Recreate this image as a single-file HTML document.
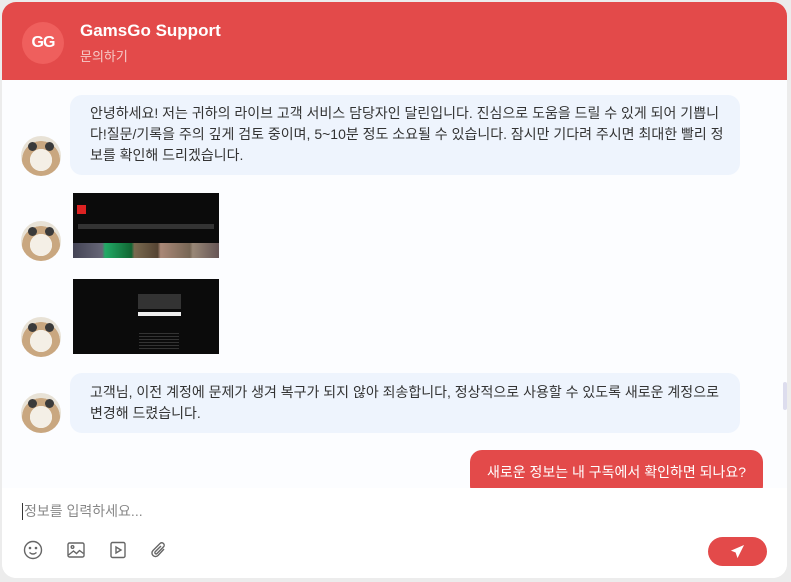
<!DOCTYPE html>
<html><head><meta charset="utf-8"><style>
*{margin:0;padding:0;box-sizing:border-box}
body{width:791px;height:582px;background:#ececec;font-family:"Liberation Sans","Noto Sans CJK KR",sans-serif;position:relative;overflow:hidden}
.card{position:absolute;left:2px;top:2px;width:785px;height:576px;background:#fff;border-radius:14px;overflow:hidden}
.hdr{position:absolute;left:0;top:0;width:785px;height:78px;background:#e34a4a}
.logo{position:absolute;left:20px;top:20px;width:42px;height:42px;border-radius:50%;background:#ef5f5d;color:#fff;font-weight:bold;font-size:16px;line-height:42px;text-align:center;letter-spacing:-1px}
.t1{position:absolute;left:78px;top:19px;color:#fff;font-weight:bold;font-size:17px}
.t2{position:absolute;left:78px;top:44px;color:#f6c9c7;font-size:13px}
.chat{position:absolute;left:0;top:78px;width:785px;height:410px;background:#fcfdff}
.b{position:absolute;background:#eef4fd;border-radius:12px;color:#333;font-size:14px;line-height:21px;padding:0 0 0 20px;white-space:nowrap;overflow:hidden}
.av{position:absolute;left:19px;width:40px;height:40px;border-radius:50%;background:radial-gradient(circle at 50% 60%,#f4efe6 0 35%,#c9a780 36% 60%,#e8e2d6 61%)}
.av:before,.av:after{content:"";position:absolute;top:6px;width:9px;height:9px;border-radius:50%;background:#3a3a3a}
.av:before{left:7px}.av:after{right:7px}
.img{position:absolute;left:71px;width:146px;background:#0b0b0b}
.me{position:absolute;left:468px;top:448px;width:293px;height:48px;background:#e34a4a;border-radius:12px;color:#fff;font-size:14px;padding-top:12px;text-align:center;white-space:nowrap}
.inp{position:absolute;left:0;top:486px;width:785px;height:90px;background:#fff}
.ph{position:absolute;left:20px;top:15px;font-size:14px;color:#888;border-left:1px solid #333;padding-left:1px;line-height:17px}
.ic{position:absolute;top:52px}
.send{position:absolute;left:706px;top:49px;width:59px;height:29px;border-radius:15px;background:#e34a4a}
.sb{position:absolute;left:781px;top:380px;width:4px;height:28px;background:#dde;border-radius:2px}
</style></head><body>
<div class="card">
<div class="chat">
<div class="b" style="left:68px;top:15px;width:670px;height:80px;padding-top:8px">안녕하세요! 저는 귀하의 라이브 고객 서비스 담당자인 달린입니다. 진심으로 도움을 드릴 수 있게 되어 기쁩니<br>다!질문/기록을 주의 깊게 검토 중이며, 5~10분 정도 소요될 수 있습니다. 잠시만 기다려 주시면 최대한 빨리 정<br>보를 확인해 드리겠습니다.</div>
<div class="av" style="top:56px"></div>
<div class="img" style="top:113px;height:65px">
<div style="position:absolute;left:4px;top:12px;width:9px;height:9px;background:#d22"></div>
<div style="position:absolute;left:5px;top:31px;width:136px;height:5px;background:#333"></div>
<div style="position:absolute;left:0;top:50px;width:146px;height:15px;background:linear-gradient(90deg,#445 0,#667 20%,#2a6 22%,#163 40%,#7a6a50 42%,#543 58%,#a87 60%,#765 80%,#987 82%,#655)"></div>
</div>
<div class="av" style="top:141px"></div>
<div class="img" style="top:199px;height:75px">
<div style="position:absolute;left:65px;top:15px;width:43px;height:15px;background:#333"></div>
<div style="position:absolute;left:65px;top:33px;width:43px;height:4px;background:#eee"></div>
<div style="position:absolute;left:66px;top:52px;width:40px;height:20px;background:repeating-linear-gradient(#0b0b0b 0 2px,#333 2px 3px)"></div>
</div>
<div class="av" style="top:237px"></div>
<div class="b" style="left:68px;top:293px;width:670px;height:60px;padding-top:9px">고객님, 이전 계정에 문제가 생겨 복구가 되지 않아 죄송합니다, 정상적으로 사용할 수 있도록 새로운 계정으로<br>변경해 드렸습니다.</div>
<div class="av" style="top:313px"></div>
</div>
<div class="me">새로운 정보는 내 구독에서 확인하면 되나요?</div>
<div class="sb"></div>
<div class="hdr"><div class="logo">GG</div><div class="t1">GamsGo Support</div><div class="t2">문의하기</div></div>
<div class="inp">
<div class="ph">정보를 입력하세요...</div>
<svg class="ic" style="left:21px" width="20" height="20" viewBox="0 0 20 20" fill="none" stroke="#666" stroke-width="1.4"><circle cx="10" cy="10" r="8.5"/><circle cx="7" cy="8" r=".6" fill="#666"/><circle cx="13" cy="8" r=".6" fill="#666"/><path d="M6.5 12.5q3.5 3 7 0"/></svg>
<svg class="ic" style="left:64px" width="20" height="20" viewBox="0 0 20 20" fill="none" stroke="#666" stroke-width="1.4"><rect x="2" y="3" width="16" height="14" rx="1.5"/><circle cx="6.5" cy="7" r="1.3"/><path d="M2.5 15l5-4 3 2.5 3-3 4 3"/></svg>
<svg class="ic" style="left:106px" width="20" height="20" viewBox="0 0 20 20" fill="none" stroke="#666" stroke-width="1.4"><rect x="3" y="2.5" width="14" height="15" rx="1.5"/><path d="M8 7v6l5-3z"/></svg>
<svg class="ic" style="left:147px" width="20" height="20" viewBox="0 0 20 20" fill="none" stroke="#666" stroke-width="1.4"><path d="M15 9l-6 6.5a3.5 3.5 0 01-5-5L11 3.5a2.4 2.4 0 013.5 3.4L8 13.5a1.2 1.2 0 01-1.8-1.7L12 6"/></svg>
<div class="send"><svg style="position:absolute;left:22px;top:7px" width="15" height="15" viewBox="0 0 16 16"><path d="M15 1L1 7l5 2 2 6z" fill="#fff"/></svg></div>
</div>
</div>
</body></html>
